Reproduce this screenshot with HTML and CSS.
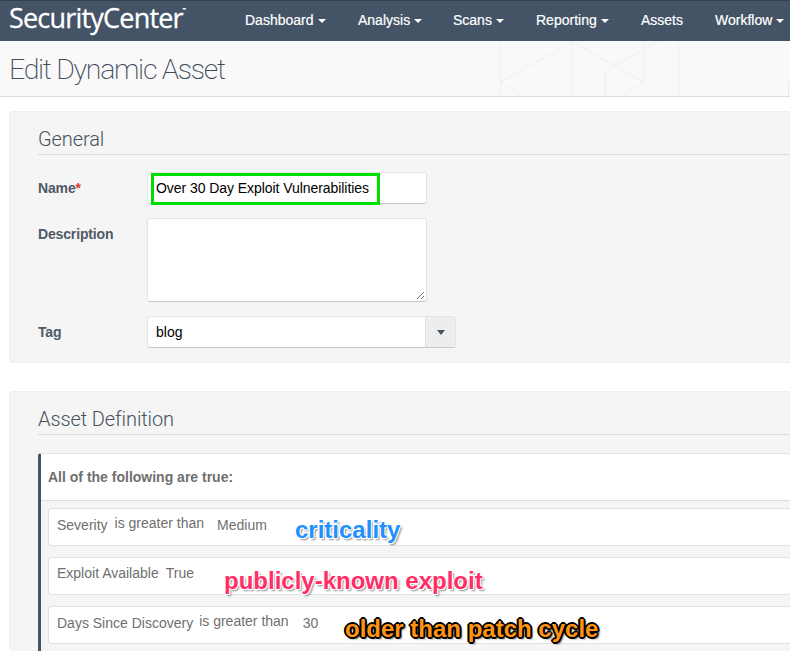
FILE: index.html
```html
<!DOCTYPE html>
<html lang="en">
<head>
<meta charset="utf-8">
<title>Edit Dynamic Asset</title>
<link rel="stylesheet" href="styles.css">
</head>
<body>
<nav class="nav">
  <a class="logo">SecurityCenter<sup class="tm">™</sup></a>
  <ul class="menu">
    <li class="menu-item w-dash">Dashboard<i class="caret"></i></li>
    <li class="menu-item w-ana">Analysis<i class="caret"></i></li>
    <li class="menu-item w-scan">Scans<i class="caret"></i></li>
    <li class="menu-item w-rep">Reporting<i class="caret"></i></li>
    <li class="menu-item w-ass">Assets</li>
    <li class="menu-item">Workflow<i class="caret"></i></li>
  </ul>
</nav>
<header class="page-head">
  <h1 class="page-title">Edit Dynamic Asset</h1>
  <svg class="hex" width="390" height="55" viewBox="0 0 390 55" fill="none" stroke="#efefef" stroke-width="1">
    <path d="M100.500 0V55M172.500 0V55M172.500 1L100.500 41L122 55M172.500 1L244 41L222 55M244 41V0M205.500 30L258 0M205.500 30V55M278.500 0V55"/>
    <path d="M388.500 55V41L390 40" stroke="#dfeedd"/>
  </svg>
</header>
<main class="content">
  <section class="panel panel-general">
    <h2 class="panel-title">General</h2>
    <div class="field field-name">
      <label class="label">Name<span class="req">*</span></label>
      <div class="input input-name">
        Over 30 Day Exploit Vulnerabilities
        <span class="highlight"></span>
      </div>
    </div>
    <div class="field field-desc">
      <label class="label">Description</label>
      <div class="input textarea">
        <svg class="grip" width="9" height="9" viewBox="0 0 9 9" stroke="#777" fill="none"><path d="M1 8L8 1M5 8L8 5"/></svg>
      </div>
    </div>
    <div class="field field-tag">
      <label class="label">Tag</label>
      <div class="select">
        <span class="select-value">blog</span>
        <span class="select-btn"><i class="select-caret"></i></span>
      </div>
    </div>
  </section>
  <section class="panel panel-def">
    <h2 class="panel-title">Asset Definition</h2>
    <div class="group">
      <div class="group-head">All of the following are true:</div>
      <div class="rules">
        <div class="rule"><span>Severity</span><span class="op op-a">is greater than</span><span class="val-a">Medium</span></div>
        <div class="rule rule-plain"><span>Exploit Available</span><span class="val-b">True</span></div>
        <div class="rule"><span>Days Since Discovery</span><span class="op op-c">is greater than</span><span class="val-c">30</span></div>
      </div>
    </div>
  </section>
</main>
<span class="note note-blue">criticality</span>
<span class="note note-pink">publicly-known exploit</span>
<span class="note note-orange">older than patch cycle</span>
</body>
</html>
```
FILE: styles.css
```css
html, body { margin: 0; padding: 0; }
body {
  width: 790px;
  height: 651px;
  overflow: hidden;
  position: relative;
  background: #fff;
  font-family: "Liberation Sans", Arial, sans-serif;
  font-size: 14px;
  color: #46535f;
}
.nav {
  height: 41px;
  box-sizing: border-box;
  border-top: 1px solid #353f4d;
  background: #445366;
  display: flex;
  align-items: center;
  color: #fff;
  white-space: nowrap;
}
.logo {
  font-family: "Open Sans", sans-serif;
  font-size: 27px;
  letter-spacing: -0.8px;
  margin-left: 9px;
  width: 236px;
  flex: none;
  line-height: 34px;
  margin-top: -6px;
  -webkit-text-stroke: 0.3px #fff;
}
.tm { font-size: 4px; vertical-align: 17px; line-height: 0; }
.menu { list-style: none; margin: 0; padding: 0; display: flex; font-size: 14px; margin-top: -2px; -webkit-text-stroke: 0.2px #fff; }
.w-dash { width: 113px; }
.w-ana { width: 95px; }
.w-scan { width: 83px; }
.w-rep { width: 105px; }
.w-ass { width: 74px; }
.caret {
  display: inline-block;
  width: 0; height: 0;
  margin-left: 4px;
  vertical-align: 2px;
  border-left: 4px solid transparent;
  border-right: 4px solid transparent;
  border-top: 4px solid #fff;
}
.page-head {
  position: relative;
  height: 56px;
  box-sizing: border-box;
  background: #f9f9f9;
  border-bottom: 1px solid #dddddd;
  overflow: hidden;
}
.page-title {
  margin: 0;
  padding: 10px 0 0 9px;
  font-family: Roboto, sans-serif;
  font-weight: 200;
  font-size: 28.5px;
  letter-spacing: -1.3px;
  line-height: 38px;
  color: #3f4c5a;
}
.hex { position: absolute; left: 400px; top: 0; }
.content { padding: 14px 0 0 9px; }
.panel {
  box-sizing: border-box;
  background: #f5f5f5;
  border: 1px solid #eeeeee;
  border-right: none;
  border-radius: 4px 0 0 4px;
  padding: 0 0 0 28px;
}
.panel-general { height: 252px; margin-bottom: 28px; }
.panel-def { height: 260px; border-bottom: none; overflow: hidden; }
.panel-title {
  margin: 0;
  height: 43px;
  box-sizing: border-box;
  border-bottom: 1px solid #dddddd;
  font-family: Roboto, sans-serif;
  font-weight: 300;
  font-size: 20px;
  letter-spacing: -0.1px;
  line-height: 54px;
  color: #46535f;
}
.panel-general .panel-title { margin-bottom: 17px; }
.panel-def .panel-title { margin-bottom: 18px; }
.field { display: flex; align-items: flex-start; }
.label { width: 109px; font-weight: bold; font-size: 14px; letter-spacing: -0.15px; line-height: 32px; color: #4e5a66; flex: none; }
.req { color: #e0352b; }
.field-name { margin-bottom: 14px; height: 32px; }
.field-desc { margin-bottom: 14px; height: 84px; }
.input {
  box-sizing: border-box;
  width: 280px;
  background: #fff;
  border: 1px solid #e4e4e4;
  border-bottom-color: #c8c8c8;
  border-radius: 3px;
  color: #000;
  position: relative;
}
.input-name { height: 32px; line-height: 30px; padding-left: 8px; letter-spacing: -0.06px; }
.highlight {
  position: absolute;
  left: 3px;
  top: 0;
  width: 229px;
  height: 32px;
  box-sizing: border-box;
  border: 3px solid #00dd00;
}
.textarea { height: 84px; }
.grip { position: absolute; right: 1px; bottom: 1px; }
.select { display: flex; width: 309px; height: 32px; box-sizing: border-box; background: #fff; border: 1px solid #e4e4e4; border-bottom-color: #c8c8c8; border-radius: 3px; }
.select-value { flex: 1; line-height: 30px; padding-left: 8px; color: #000; }
.select-btn { width: 29px; background: #ecedef; border-left: 1px solid #e0e0e0; display: flex; align-items: center; justify-content: center; }
.select-caret { width: 0; height: 0; border-left: 4px solid transparent; border-right: 4px solid transparent; border-top: 5px solid #46535f; }
.group {
  background: #fff;
  border-left: 3px solid #445366;
  border-top: 1px solid #e4e4e4;
  border-radius: 3px 0 0 0;
}
.group-head {
  height: 47px;
  box-sizing: border-box;
  border-bottom: 1px solid #dddddd;
  padding-left: 7px;
  line-height: 46px;
  font-weight: bold;
  font-size: 14px;
  color: #6f6f6f;
}
.rules { background: #f5f5f5; padding: 7px 0 8px 7px; display: flex; flex-direction: column; gap: 11px; }
.rule {
  height: 38px;
  box-sizing: border-box;
  background: #fff;
  border: 1px solid #e2e2e2;
  border-right: none;
  border-radius: 3px 0 0 3px;
  padding-left: 8px;
  display: flex;
  line-height: 32px;
  font-size: 14px;
  color: #6f6f6f;
}
.op { line-height: 28px; }
.op-a { margin-left: 7px; }
.val-a { margin-left: 13px; }
.rule-plain { line-height: 30px; }
.val-b { margin-left: 7px; }
.op-c { margin-left: 6px; }
.val-c { margin-left: 14px; }
.note {
  position: absolute;
  font-weight: bold;
  white-space: nowrap;
  font-size: 24px;
  line-height: 26px;
}
.note-blue {
  left: 295px; top: 517px;
  color: #1e90ff;
  text-shadow: 1px 1px 0 #fff, -1px -1px 0 #fff, 1px -1px 0 #fff, -1px 1px 0 #fff, 2px 2px 2px #888;
}
.note-pink {
  left: 224px; top: 568px;
  color: #ff2d68;
  text-shadow: 1px 1px 0 #fff, -1px -1px 0 #fff, 1px -1px 0 #fff, -1px 1px 0 #fff, 2px 2px 2px #888;
}
.note-orange {
  left: 345px; top: 616px;
  color: #ff9412;
  text-shadow: 1px 1px 0 #000, -1px -1px 0 #000, 1px -1px 0 #000, -1px 1px 0 #000, 0 2px 0 #000, 2px 0 0 #000, -2px 0 0 #000, 0 -2px 0 #000, 2px 2px 2px #333;
}
```
